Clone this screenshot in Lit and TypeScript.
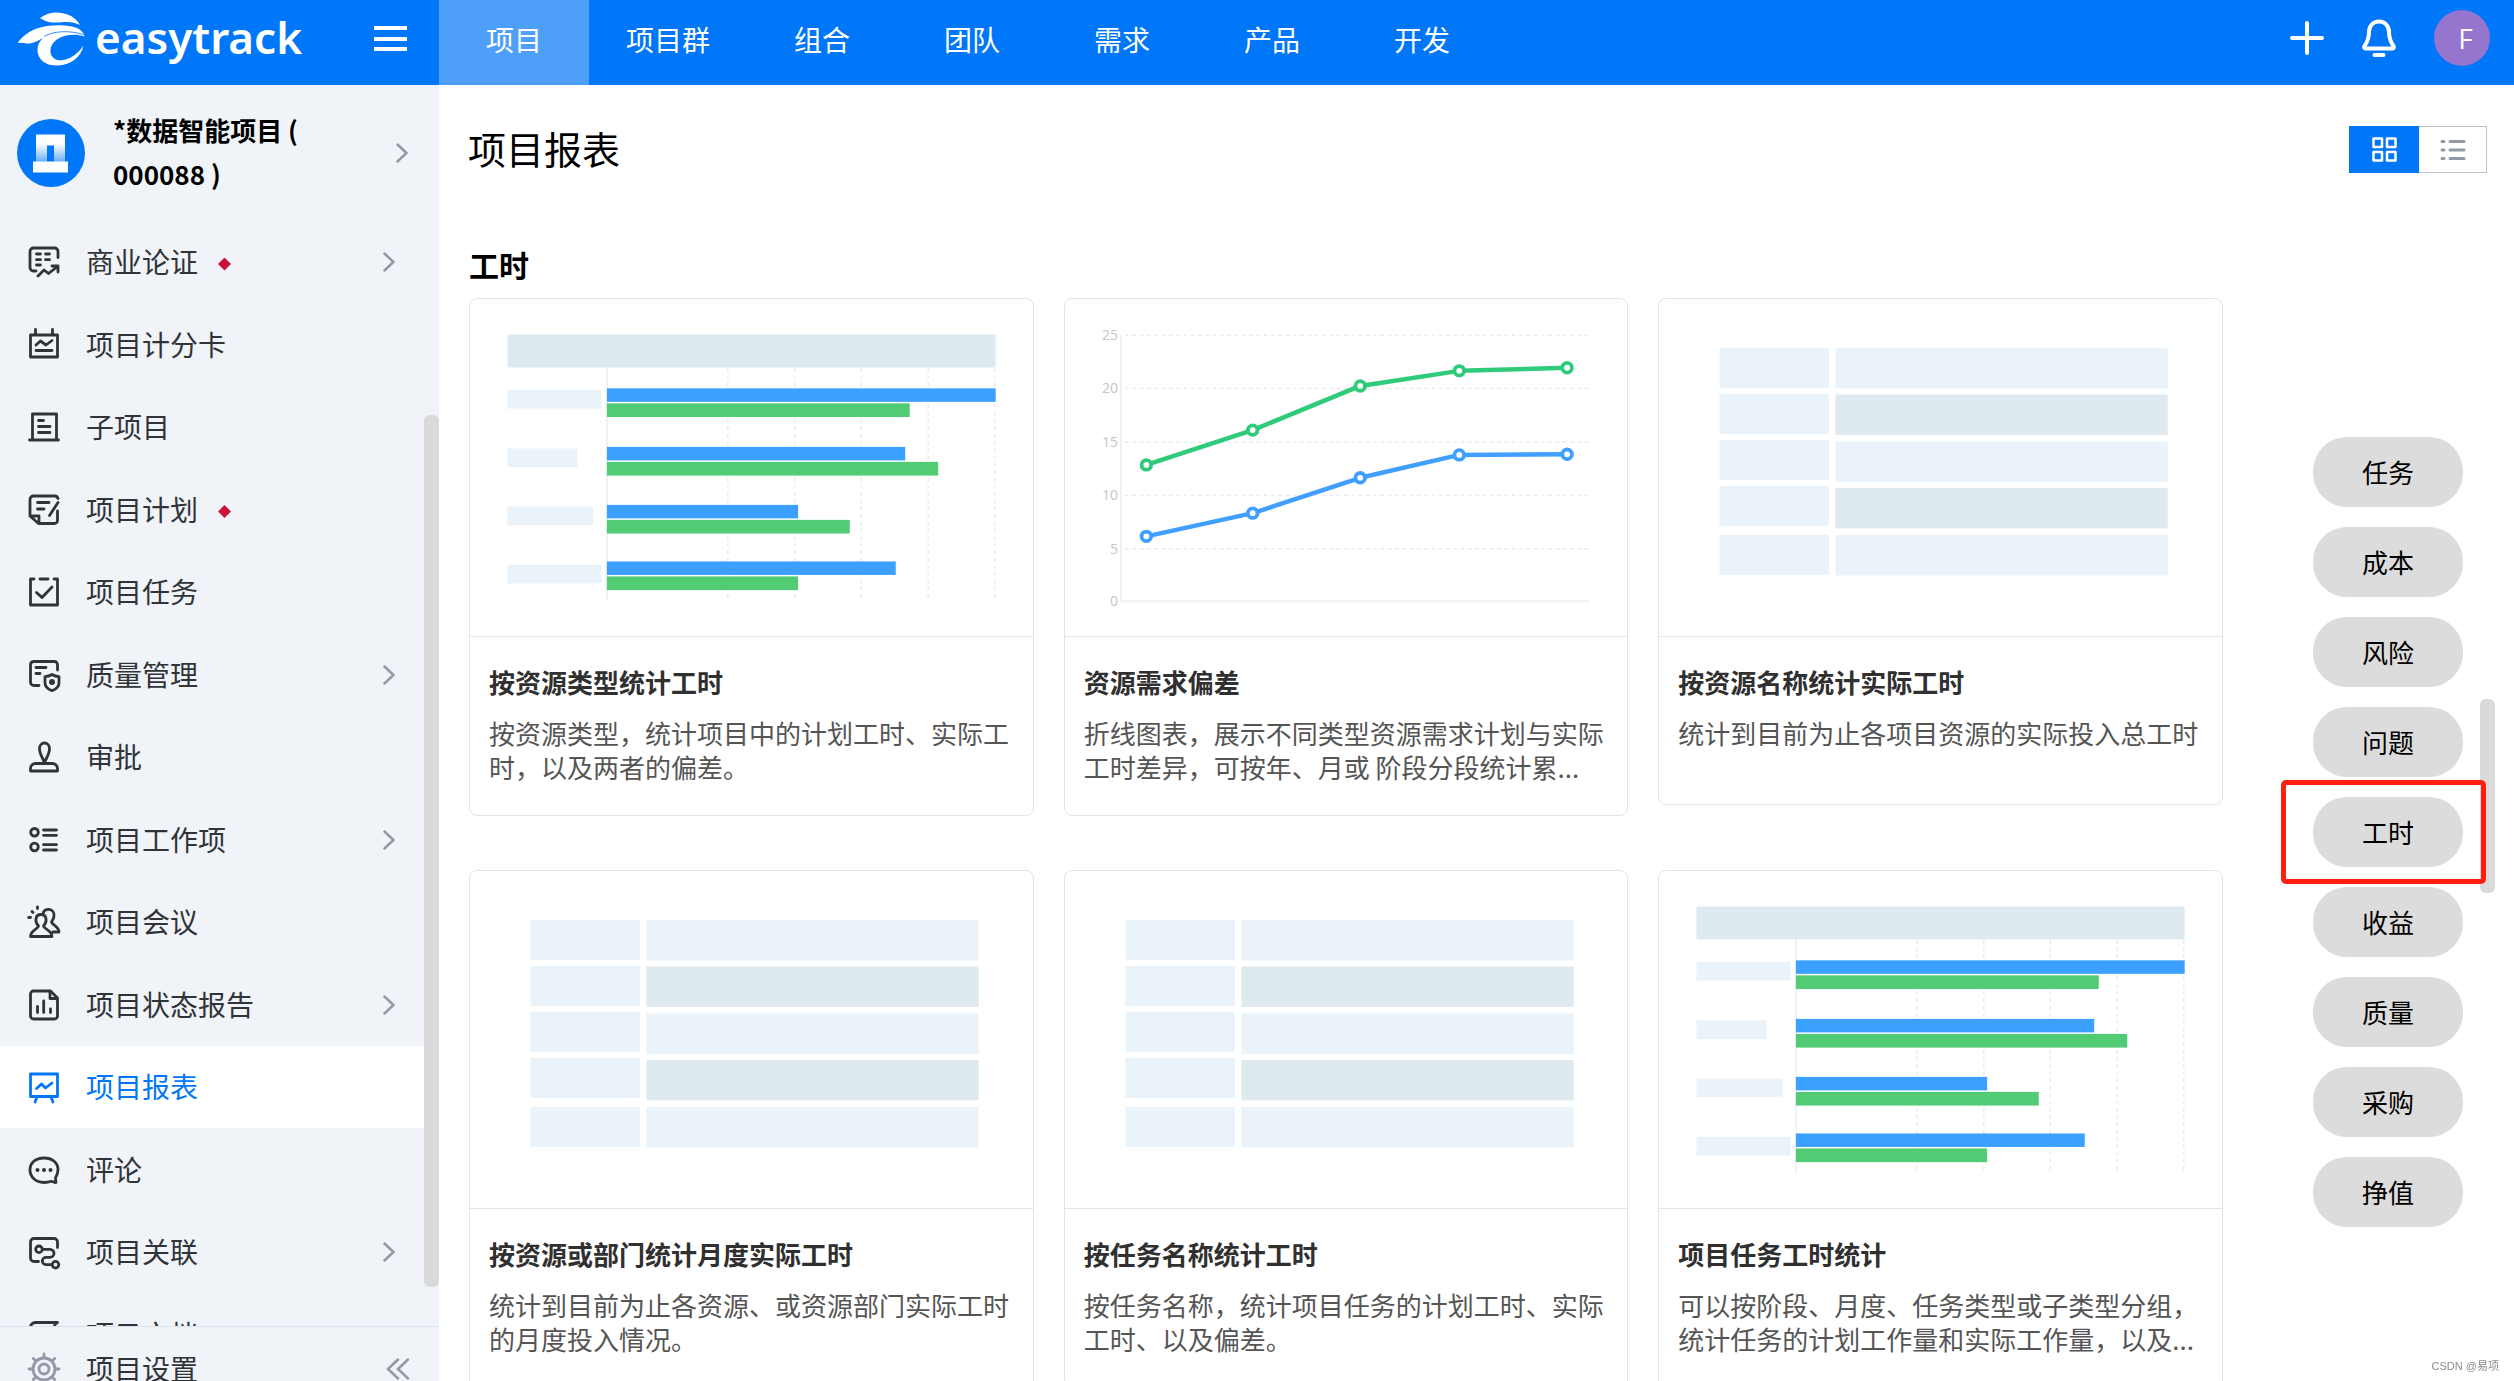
import { LitElement, html, svg, css, nothing } from "lit";
import { customElement, property } from "lit/decorators.js";
import { classMap } from "lit/directives/class-map.js";

const icons: Record<string, unknown> = {
  argument: svg`<path d="M29 10.500V4.500a3.500 3.500 0 0 0-3.500-3.500h-21A3.500 3.500 0 0 0 1 4.500v16A3.500 3.500 0 0 0 4.500 24H7M7.500 7h4M16.500 7h4M7.500 12.700h4M16.500 12.700h4M7.500 18h4M9 29l6-6 4.500 3.500L28.500 19.500M23 19h6v6"/>`,
  scorecard: svg`<path d="M1.500 5h27v22h-27zM6.500-.5V5M23.500-.5V5M7 15l4.500-4 5.500 4 6-4.500M7 20.500h16"/>`,
  subproject: svg`<path d="M3.500 28V2h24v26M.5 28h29M9.500 8.500h5M9.500 14.500h11.500M9.500 20.500h11.500"/>`,
  plan: svg`<path d="M29 3.500C28.500 2 27.500 1 26 1H4.500A3.500 3.500 0 0 0 1 4.500V21h9v7.500M1 21l8.500 7.500H25.500a3 3 0 0 0 3-3V16M8.500 7.500H20M8.500 14H15M29 7.500 20.500 20.500"/>`,
  task: svg`<path d="M5 2H1.500v26h27V2H25M11 2h8M7.500 15.500 13 20.500 23 10"/>`,
  quality: svg`<path d="M28.500 10V4.500A3 3 0 0 0 25.500 1.500h-21A3.500 3.500 0 0 0 1.500 4.500V22A3.500 3.500 0 0 0 5 25.500h5M7 7.500h10M7 13.500h4M23 14.500c2.500 1.500 4.500 2 7 2.200v6c0 4-3 6.500-7 8-4-1.500-7-4-7-8v-6c2.500-.2 4.500-.7 7-2.200z"/><circle class="dot" cx="23" cy="22" r="3"/>`,
  approval: svg`<path d="M15.500 20.500c-2-5-5-8.500-5-14a5 5.500 0 0 1 10 0c0 5.500-3 9-5 14zM1.500 29h27v-2.500a5 5 0 0 0-5-5h-17a5 5 0 0 0-5 5z"/>`,
  items: svg`<circle cx="5.500" cy="7.300" r="3.800"/><circle cx="5.500" cy="22" r="3.800"/><path d="M14.500 5H27.500M14.500 10.300H27.500M14.500 19.700H27.500M14.500 25H27.500"/>`,
  meeting: svg`<path d="M9.500 19C5.500 15 6 7.500 12 7.500s6.500 7.500 2.500 11.500c.5 3.500 8.500 4 8.500 10.500H1.500c0-6.500 7.500-7 8-10.500zM14 7c.5-7 12-6 11 2-.3 3-1.500 4.500-2.500 6 .5 3 7.500 4 7.500 10h-6M8.500 0v1.500M3 4.500l1 1M-.3 10.500h1.800"/>`,
  status: svg`<path d="M4.500 1H21.500L28.500 8v18a3 3 0 0 1-3 3h-21a3 3 0 0 1-3-3V4a3 3 0 0 1 3-3zM21 1.500V8.500h7M8.500 16.500v6M14.700 11v11.500M21.500 19v3.500"/>`,
  report: svg`<path d="M1.500 2h27v22.500h-27zM8 25 6 30M22 25l2 5M7.500 16.500l5-4.500 4 4 6.500-5"/>`,
  comment: svg`<path d="M27 27.500c-2.500 0-3-1.200-4.500-1.200-2 .7-4.500 1.200-7.500 1.200C6.500 27 1 22 1 15 1 7.500 7 3 15 3s14 4.500 14 11.500c0 3.500-1 6-2.500 8.500-.3 1.500.8 3 .5 4.500z"/><g class="dot"><circle cx="8.500" cy="15" r="2"/><circle cx="15" cy="15" r="2"/><circle cx="21.500" cy="15" r="2"/></g>`,
  relation: svg`<path d="M28.500 10.500V5A3.500 3.500 0 0 0 25 1.500H5A3.500 3.500 0 0 0 1.500 5V21A3.500 3.500 0 0 0 5 24.500h4.500M13.500 12.300H21a4 4 0 0 1 0 8H17a3.700 3.700 0 0 0 0 7.400h6"/><circle cx="10" cy="12.300" r="3.300"/><circle cx="26.500" cy="27.700" r="3.300"/>`,
  document: svg`<path d="M1.500 26V8C1.500 4.500 3.500 2.500 6.500 2.500H28.500C25.500 4 25 5.500 25 8v20H4"/>`,
  gear: svg`<circle cx="15" cy="15" r="11"/><circle cx="15" cy="15" r="5"/><path d="M15 0v3M15 27v3M0 15h3M27 15h3M4.400 4.400l2 2M23.600 23.600l2 2M4.400 25.600l2-2M23.600 6.400l2-2"/>`,
};

@customElement("line-icon")
export class LineIcon extends LitElement {
  @property() name = "";
  static styles = css`
    :host { display: block; width: 30px; height: 30px; flex: none; }
    .glyph {
      display: block; width: 30px; height: 30px; overflow: visible;
      fill: none; stroke: currentColor; stroke-width: 2.8;
      stroke-linecap: round; stroke-linejoin: round;
    }
    .dot { fill: currentColor; stroke: none; }
  `;
  render() {
    return html`<svg class="glyph" viewBox="0 0 30 30" aria-hidden="true">${icons[this.name]}</svg>`;
  }
}

const barRows = [
  { label: 94, y: 91, by: 89.4, blue: 389, green: 303 },
  { label: 70, y: 149.5, by: 148, blue: 298.5, green: 331.5 },
  { label: 86, y: 207.7, by: 206, blue: 191.3, green: 243 },
  { label: 94, y: 266, by: 262.6, blue: 289, green: 191.3 },
];
const greenLine = [[81.4, 166], [187.8, 131.2], [295.4, 87], [394.5, 71.9], [502.4, 68.8]];
const blueLine = [[81.4, 237.5], [187.8, 214.3], [295.4, 178.9], [394.5, 156], [502.4, 155.4]];
const axis = [[25, 36.5], [20, 89.5], [15, 143], [10, 196.5], [5, 250], [0, 302.5]];
const tableLeft = [49, 95, 141, 187, 236];
const tableRight = [49, 95.5, 142.5, 189, 236];

@customElement("chart-preview")
export class ChartPreview extends LitElement {
  @property() kind = "table";
  static styles = css`
    :host { display: block; }
    .canvas { display: block; width: 100%; height: auto; }
    .head { fill: #dfeaf0; }
    .pale { fill: #eaf3f9; }
    .blue { fill: #3ba0ff; }
    .green { fill: #51cc75; }
    .grid { stroke: #e9eced; stroke-width: 1.5; stroke-dasharray: 4 3.3; fill: none; }
    .axis { stroke: #eef2f3; stroke-width: 2; fill: none; }
    .tick { font: 14px "Open Sans", "Noto Sans", sans-serif; fill: #c2c6c8; text-anchor: end; }
    .line { fill: none; stroke-width: 4.5; stroke-linejoin: round; }
    .mark { fill: #fff; stroke-width: 3.8; }
    .sgreen { stroke: #2fca7a; }
    .sblue { stroke: #409fff; }
  `;
  private bars() {
    return svg`
      <path class="axis" d="M137 69V301"/>
      ${[258, 325, 391.5, 458.5, 525].map((x) => svg`<path class="grid" d="M${x} 69V301"/>`)}
      <rect class="head" x="37.500" y="35.500" width="488.500" height="33"/>
      ${barRows.map((r) => svg`
        <rect class="pale" x="37.500" y=${r.y} width=${r.label} height="18.700"/>
        <rect class="blue" x="137" y=${r.by} width=${r.blue} height="13.500"/>
        <rect class="green" x="137" y=${r.by + 15} width=${r.green} height="13.700"/>`)}`;
  }
  private series(points: number[][], cls: string) {
    return svg`
      <polyline class="line ${cls}" points=${points.map((p) => p.join(",")).join(" ")}/>
      ${points.map((p) => svg`<circle class="mark ${cls}" cx=${p[0]} cy=${p[1]} r="4.800"/>`)}`;
  }
  private lines() {
    return svg`
      ${axis.map(([v, y]) => svg`
        <text class="tick" x="53" y=${y + 5}>${v}</text>
        ${v ? svg`<path class="grid" d="M60 ${y}H525"/>` : nothing}`)}
      <path class="axis" d="M56 36V302.500H525"/>
      ${this.series(greenLine, "sgreen")}
      ${this.series(blueLine, "sblue")}`;
  }
  private table() {
    return svg`
      ${tableLeft.map((y) => svg`<rect class="pale" x="60.500" y=${y} width="109.500" height="40"/>`)}
      ${tableRight.map((y, i) => svg`<rect class=${i % 2 ? "head" : "pale"} x="176.500" y=${y} width="332.500" height="40.500"/>`)}`;
  }
  render() {
    const body = this.kind === "bars" ? this.bars() : this.kind === "lines" ? this.lines() : this.table();
    return html`<svg class="canvas" viewBox="0 0 563 337" aria-hidden="true">${body}</svg>`;
  }
}

const tabs = ["项目", "项目群", "组合", "团队", "需求", "产品", "开发"];
const nav = [
  { icon: "argument", label: "商业论证", flag: true, more: true },
  { icon: "scorecard", label: "项目计分卡" },
  { icon: "subproject", label: "子项目" },
  { icon: "plan", label: "项目计划", flag: true },
  { icon: "task", label: "项目任务" },
  { icon: "quality", label: "质量管理", more: true },
  { icon: "approval", label: "审批" },
  { icon: "items", label: "项目工作项", more: true },
  { icon: "meeting", label: "项目会议" },
  { icon: "status", label: "项目状态报告", more: true },
  { icon: "report", label: "项目报表", active: true },
  { icon: "comment", label: "评论" },
  { icon: "relation", label: "项目关联", more: true },
  { icon: "document", label: "项目文档" },
];
const cards = [
  { kind: "bars", title: "按资源类型统计工时", text: "按资源类型，统计项目中的计划工时、实际工时，以及两者的偏差。" },
  { kind: "lines", title: "资源需求偏差", text: "折线图表，展示不同类型资源需求计划与实际工时差异，可按年、月或 阶段分段统计累..." },
  { kind: "table", title: "按资源名称统计实际工时", text: "统计到目前为止各项目资源的实际投入总工时" },
  { kind: "table", title: "按资源或部门统计月度实际工时", text: "统计到目前为止各资源、或资源部门实际工时的月度投入情况。" },
  { kind: "table", title: "按任务名称统计工时", text: "按任务名称，统计项目任务的计划工时、实际工时、以及偏差。" },
  { kind: "bars", title: "项目任务工时统计", text: "可以按阶段、月度、任务类型或子类型分组，统计任务的计划工作量和实际工作量，以及..." },
];
const anchors = ["任务", "成本", "风险", "问题", "工时", "收益", "质量", "采购", "挣值"];

@customElement("app-root")
export class AppRoot extends LitElement {
  static styles = css`
    :host {
      display: block;
      font-family: "Noto Sans CJK SC", "Noto Sans", sans-serif;
      color: #000;
    }
    * { box-sizing: border-box; }
    a { color: inherit; text-decoration: none; }
    button { font: inherit; color: inherit; border: 0; padding: 0; background: none; cursor: pointer; }
    ul { list-style: none; margin: 0; padding: 0; }
    h1, h2, h3, p { margin: 0; }
    svg { display: block; }

    .app { display: flex; flex-direction: column; height: 100vh; overflow: hidden; background: #fff; }
    .topbar { display: flex; flex: none; height: 85px; background: #0076f8; color: #fff; }
    .brand { display: flex; width: 439px; flex: none; padding: 0 32px 8px 18px; align-items: center; justify-content: space-between; }
    .logo { display: flex; align-items: center; gap: 9px; font: 600 44px/56px "Noto Sans", sans-serif; }
    .logo span { padding-bottom: 4px; }
    .tabs { display: flex; flex: 1; font-size: 28px; }
    .tab { display: flex; align-items: center; justify-content: center; min-width: 150px; padding: 0 37px 8px; }
    .tab.on { background: #4e9ffa; }
    .tools { display: flex; align-items: center; gap: 37px; padding: 0 24px 9px 0; }
    .avatar { width: 56px; height: 56px; border-radius: 50%; background: #9575cd; font: 28px/56px "Open Sans", sans-serif; padding-left: 7px; }

    .body { display: flex; flex: 1; min-height: 0; }
    .side { display: flex; flex-direction: column; width: 439px; flex: none; background: #f0f4f8; }
    .project { display: flex; align-items: center; height: 136px; flex: none; padding: 0 31px 0 17px; font-weight: 700; font-size: 26px; line-height: 44px; }
    .project .name { flex: 1; padding: 0 60px 2px 28px; }
    .project .chev { color: #9298a8; }
    .navwrap { display: flex; flex: 1; min-height: 0; overflow: hidden; }
    .nav { flex: 1; }
    .nav li { height: 82px; }
    .nav li:nth-child(even) { height: 83px; }
    .item { display: flex; align-items: center; height: 100%; padding: 0 29px; font-size: 28px; color: #303338; }
    .item .label { margin-left: 27px; padding-bottom: 2px; }
    .item .flag { width: 13px; height: 13px; margin: 4px 0 0 20px; background: #c8143c; clip-path: polygon(50% 0, 100% 50%, 50% 100%, 0 50%); }
    .item .chev { margin-left: auto; color: #9298a8; }
    .item.on { background: #fff; color: #0076f8; }
    .track { display: flex; flex-direction: column; width: 15px; flex: none; }
    .thumb { background: #dadada; border-radius: 6px; }
    .track .before { flex: 194; }
    .track .thumb { flex: 872; }
    .track .after { flex: 39; }
    .settings { flex: 0 0 55px; border-top: 1px solid #d8e4ec; overflow: hidden; }
    .settings .row { display: flex; align-items: center; height: 83px; padding: 0 29px; color: #9298a8; font-size: 28px; }
    .settings .label { flex: 1; margin-left: 27px; padding-bottom: 2px; color: #303338; }

    .main { display: flex; flex-direction: column; flex: 1; min-width: 0; }
    .pagehead { display: flex; justify-content: space-between; align-items: center; padding: 41px 27px 0 29px; flex: none; }
    .pagehead h1 { font-size: 38px; font-weight: 400; line-height: 43px; padding-bottom: 4px; }
    .switch { display: flex; height: 47px; }
    .switch button { display: flex; align-items: center; justify-content: center; width: 70px; }
    .switch .on { background: #0076f8; color: #fff; }
    .switch .off { width: 68px; border: 1px solid #bfc2cc; border-left: 0; color: #9298a8; }
    .content { display: flex; flex: 1; min-height: 0; }
    .reports { flex: 1; padding: 71px 0 0 30px; }
    .reports h2 { font-size: 30px; line-height: 40px; margin-bottom: 14px; }
    .cards { display: grid; grid-template-columns: repeat(3, 1fr); gap: 54px 30px; align-items: start; }
    .card { display: block; border: 1px solid #e4e4e4; border-radius: 8px; }
    .info { border-top: 1px solid #e4e4e4; padding: 28px 19px 31px; font-size: 26px; line-height: 34px; }
    .info h3 { font-size: 26px; color: #303030; margin-bottom: 17px; }
    .info p { color: #555; min-height: 57px; }

    .aside { display: flex; width: 291px; flex: none; }
    .anchors { display: flex; flex-direction: column; gap: 20px; padding: 264px 17px 0 90px; }
    .anchors li { position: relative; }
    .pill { width: 150px; height: 70px; padding-bottom: 2px; border-radius: 34px; background: #dcdcdc; font-size: 26px; }
    .frame { position: absolute; z-index: 1; inset: -17px -23px -17px -32px; border: 5px solid #ff1f11; border-radius: 5px; pointer-events: none; }
    .aside .before { flex: 526; }
    .aside .thumb { flex: 194; }
    .aside .after { flex: 488; }
    .mark { position: fixed; right: 15px; bottom: 6px; font: 11px/18px "Liberation Sans", "Noto Sans CJK SC", sans-serif; color: #8a8a8a; }
  `;

  private chevron() {
    return html`<svg class="chev" width="12" height="20" viewBox="0 0 12 20" fill="none" stroke="currentColor" stroke-width="2.500" stroke-linecap="round" aria-hidden="true"><path d="M1.500 1.500 10.500 10 1.500 18.500"/></svg>`;
  }

  render() {
    return html`
      <div class="app">
        <header class="topbar">
          <div class="brand">
            <a class="logo" href="#">
              <svg width="68" height="56" viewBox="18 10 68 56" fill="#fff" aria-hidden="true">
                <path d="M40 17C48 11.500 56 10.500 64 12.500c8 2 13 6 16 11.500-5-2.500-10-3.500-16-3-7 .7-12 1-16-.2-3.500-1-6-2.300-8-3.800z"/>
                <path d="M17.500 42C24 33 33 27 47 25c13-1.800 25-.5 31 2.500 4 2 6 5 6.500 8-6-2.500-16-2.500-23 .5C54 39 50 45 50.500 51c.5 6 6 9.500 13 8 8-1.500 15-7 20-14.500C81 56 71 64 58 64.500c-13 .5-20-6-20.500-15-.3-5 2-9 5.500-12.500-5 3-11 6-16 5.500-3-.3-6-1-9.500-.5z"/>
                <path d="M44 35.500C54 30 68 29 83.500 33.500" fill="none" stroke="#0076f8" stroke-width="0.800"/>
              </svg>
              <span>easytrack</span>
            </a>
            <button aria-label="菜单">
              <svg width="33" height="26" viewBox="0 0 33 26" fill="#fff" aria-hidden="true"><path d="M0 0h33v4H0zM0 11h33v4H0zM0 21h33v4H0z"/></svg>
            </button>
          </div>
          <nav class="tabs">
            ${tabs.map((t, i) => html`<a class=${classMap({ tab: true, on: i === 0 })} href="#">${t}</a>`)}
          </nav>
          <div class="tools">
            <button aria-label="新建">
              <svg width="34" height="34" viewBox="0 0 34 34" stroke="#fff" stroke-width="4" stroke-linecap="round" aria-hidden="true"><path d="M17 2v30M2 17h30"/></svg>
            </button>
            <button aria-label="通知">
              <svg width="36" height="38" viewBox="0 0 36 38" fill="none" stroke="#fff" stroke-width="4" stroke-linecap="round" stroke-linejoin="round" aria-hidden="true"><path d="M18 2.500c6 0 10 4.500 10 10.500 0 6.500 2 10.500 4.500 14 .8 1.500.3 2.500-1 2.500h-27c-1.300 0-1.800-1-1-2.500C6 23.500 8 19.500 8 13 8 7 12 2.500 18 2.500zM13.500 36h9"/></svg>
            </button>
            <button class="avatar">F</button>
          </div>
        </header>
        <div class="body">
          <aside class="side">
            <a class="project" href="#">
              <svg width="68" height="68" viewBox="0 0 68 68" aria-hidden="true">
                <defs><linearGradient id="fade" x1="0" y1="0" x2="0" y2="1"><stop offset=".35" stop-color="#fff"/><stop offset="1" stop-color="#fff" stop-opacity=".4"/></linearGradient></defs>
                <circle cx="34" cy="34" r="34" fill="#0076f8"/>
                <path d="M19 15.500h29V43H37V26.500h-7V43H19z" fill="url(#fade)"/>
                <path d="M16 42.500h35v11H16z" fill="#fff"/>
              </svg>
              <span class="name">*数据智能项目 ( 000088 )</span>
              ${this.chevron()}
            </a>
            <div class="navwrap">
              <ul class="nav">
                ${nav.map((n) => html`<li><a class=${classMap({ item: true, on: !!n.active })} href="#">
                  <line-icon name=${n.icon}></line-icon>
                  <span class="label">${n.label}</span>
                  ${n.flag ? html`<span class="flag"></span>` : nothing}
                  ${n.more ? this.chevron() : nothing}
                </a></li>`)}
              </ul>
              <div class="track"><div class="before"></div><div class="thumb"></div><div class="after"></div></div>
            </div>
            <div class="settings">
              <div class="row">
                <line-icon name="gear"></line-icon>
                <a class="label" href="#">项目设置</a>
                <button aria-label="收起">
                  <svg width="24" height="22" viewBox="0 0 24 22" fill="none" stroke="#9298a8" stroke-width="2.500" stroke-linecap="round" aria-hidden="true"><path d="M12 1.500 2 11l10 9.500M22 1.500 12 11l10 9.500"/></svg>
                </button>
              </div>
            </div>
          </aside>
          <main class="main">
            <div class="pagehead">
              <h1>项目报表</h1>
              <div class="switch">
                <button class="on" aria-label="卡片视图">
                  <svg width="25" height="25" viewBox="0 0 25 25" fill="none" stroke="currentColor" stroke-width="2.500" stroke-linejoin="round" aria-hidden="true"><path d="M1.500 1.500h8.500v8.500H1.500zM15 1.500h8.500v8.500H15zM1.500 15h8.500v8.500H1.500zM15 15h8.500v8.500H15z"/></svg>
                </button>
                <button class="off" aria-label="列表视图">
                  <svg width="26" height="22" viewBox="0 0 26 22" stroke="currentColor" stroke-width="3" stroke-linecap="round" aria-hidden="true"><path d="M2 2.500h2M10 2.500h14M2 11h2M10 11h14M2 19.500h2M10 19.500h14"/></svg>
                </button>
              </div>
            </div>
            <div class="content">
              <section class="reports">
                <h2>工时</h2>
                <div class="cards">
                  ${cards.map((c) => html`<a class="card" href="#">
                    <chart-preview kind=${c.kind}></chart-preview>
                    <div class="info"><h3>${c.title}</h3><p>${c.text}</p></div>
                  </a>`)}
                </div>
              </section>
              <div class="aside">
                <ul class="anchors">
                  ${anchors.map((a) => html`<li><button class="pill">${a}</button>${a === "工时" ? html`<span class="frame"></span>` : nothing}</li>`)}
                </ul>
                <div class="track"><div class="before"></div><div class="thumb"></div><div class="after"></div></div>
              </div>
            </div>
          </main>
        </div>
        <div class="mark">CSDN @易项</div>
      </div>
    `;
  }
}
